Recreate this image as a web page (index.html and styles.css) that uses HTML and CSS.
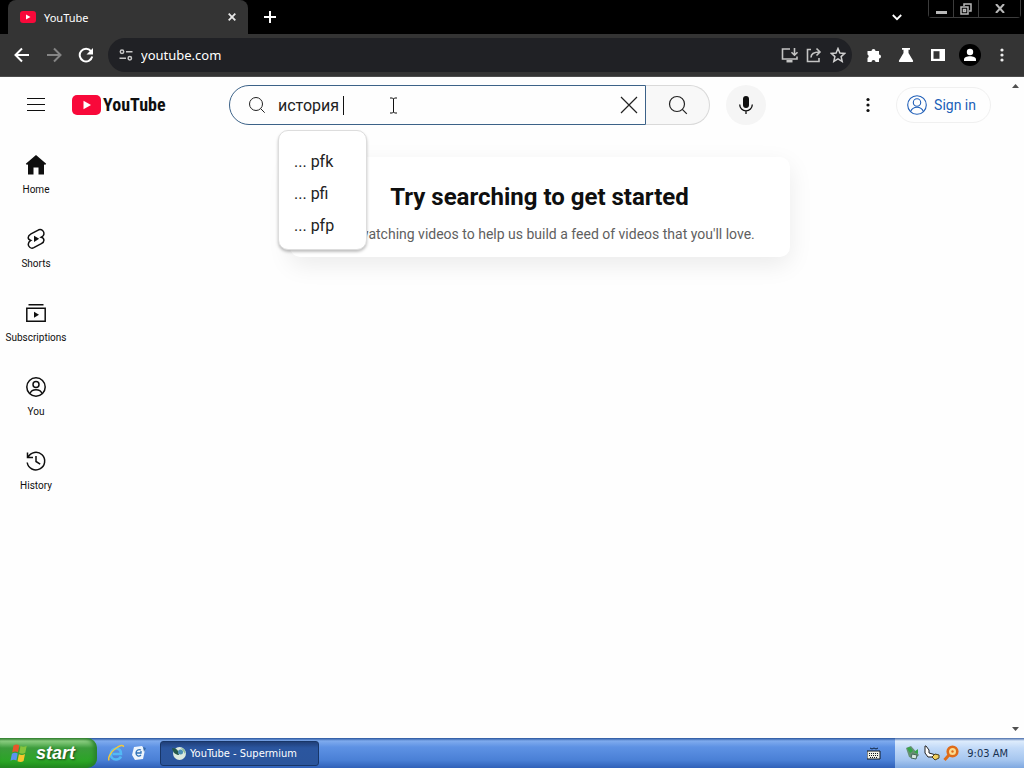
FILE: index.html
```html
<!doctype html>
<html lang="en">
<head>
    <meta charset="UTF-8">
    <meta name="viewport" content="width=device-width, initial-scale=1.0">
    <title>YouTube</title>
    <link rel="stylesheet" href="styles.css">
</head>
<body>
<!-- Tab strip -->
<div class="tabstrip">
    <div class="tab">
        <svg class="favicon" width="16" height="12" viewBox="0 0 16 12"><rect width="16" height="12" rx="3" fill="#f8093a"/><path d="M6 3.5v5L10.500 6z" fill="#fff"/></svg>
        <span class="tab-title">YouTube</span>
        <button class="icon-btn" aria-label="Close tab"><svg width="8" height="8" viewBox="0 0 8 8"><path d="M.7.7l6.600 6.600M7.300.7L.7 7.300" stroke="#e8e8e8" stroke-width="1.800"/></svg></button>
    </div>
    <button class="icon-btn new-tab" aria-label="New tab"><svg width="12" height="12" viewBox="0 0 12 12"><path d="M6 0v12M0 6h12" stroke="#fff" stroke-width="2"/></svg></button>
    <button class="icon-btn tab-search" aria-label="Search tabs"><svg width="10" height="7" viewBox="0 0 10 7"><path d="M.8 1L5 5.200 9.200 1" fill="none" stroke="#fff" stroke-width="1.800"/></svg></button>
    <div class="window-buttons">
        <button class="win-btn" aria-label="Minimize"><svg width="11" height="11" viewBox="0 0 11 11"><path d="M0 8h11v3H0z" fill="#b8b8b8"/></svg></button>
        <button class="win-btn" aria-label="Restore"><svg width="12" height="12" viewBox="0 0 12 12"><path d="M4 3V1h7v7H9M1 4h7v7H1zM3.500 6.500h2v2h-2z" fill="none" stroke="#b8b8b8" stroke-width="1.500"/></svg></button>
        <button class="win-btn win-close" aria-label="Close"><svg width="10" height="9" viewBox="0 0 10 9"><path d="M1 0l8 9M9 0L1 9" stroke="#b8b8b8" stroke-width="2"/></svg></button>
    </div>
</div>

<!-- Toolbar -->
<div class="toolbar">
    <button class="icon-btn" aria-label="Back"><svg width="16" height="16" viewBox="0 0 16 16"><path d="M15 8H2M8 1.500L1.500 8 8 14.500" fill="none" stroke="#fff" stroke-width="2"/></svg></button>
    <button class="icon-btn" aria-label="Forward" disabled><svg width="16" height="16" viewBox="0 0 16 16"><path d="M1 8h13M8 1.500L14.500 8 8 14.500" fill="none" stroke="#858585" stroke-width="2"/></svg></button>
    <button class="icon-btn" aria-label="Reload"><svg width="16" height="16" viewBox="0 0 16 16"><path d="M13 4.200A6.300 6.300 0 1 0 14.200 9.500" fill="none" stroke="#fff" stroke-width="2"/><path d="M15 1v6.500H8.500z" fill="#fff"/></svg></button>
    <div class="omnibox">
        <svg width="14" height="12" viewBox="0 0 14 12" fill="none" stroke="#c8c8c8" stroke-width="1.500"><circle cx="3" cy="2.800" r="1.700"/><path d="M7 2.800h6.500M.5 9.200H7"/><circle cx="10.800" cy="9.200" r="1.700"/></svg>
        <input class="url" type="text" value="youtube.com" aria-label="Address">
        <button class="icon-btn" aria-label="Install"><svg width="18" height="16" viewBox="0 0 18 16" fill="none" stroke="#c4c4c4" stroke-width="1.600"><path d="M9 2H1.500v10H16V9.500"/><path d="M13.500 1v7M10.500 5.200l3 3 3-3"/><path d="M5.500 14.200h6" stroke-width="2.500"/></svg></button>
        <button class="icon-btn" aria-label="Share"><svg width="16" height="16" viewBox="0 0 16 16" fill="none" stroke="#c4c4c4" stroke-width="1.600"><path d="M5 2.500H1.500v12h11.500V11"/><path d="M5 10.500c0-4 2.500-5.500 8.500-5.500M10.500 1.500L14 5l-3.500 3.500"/></svg></button>
        <button class="icon-btn" aria-label="Bookmark"><svg width="16" height="16" viewBox="0 0 16 16"><path d="M8 1.500l1.900 4.500 4.800.4-3.600 3.200 1.100 4.800L8 11.900l-4.200 2.500 1.100-4.800L1.300 6.400 6.100 6z" fill="none" stroke="#d0d0d0" stroke-width="1.500"/></svg></button>
    </div>
    <div class="toolbar-actions">
        <button class="icon-btn" aria-label="Extensions"><svg width="16" height="16" viewBox="0 0 16 16"><path d="M1.500 4h4a2 2 0 1 1 4 0h3.500v3.500a2 2 0 1 1 0 4V15H9.500a2 2 0 0 0-4 0h-4v-4a2 2 0 0 0 0-3.600z" fill="#fff"/></svg></button>
        <button class="icon-btn" aria-label="Experiments"><svg width="16" height="16" viewBox="0 0 16 16"><path d="M4 1h8v1.800h-1.500V6l4.500 7.500c.4 1-.1 1.500-1 1.500H2c-.9 0-1.400-.5-1-1.500L5.500 6V2.800H4z" fill="#fff"/></svg></button>
        <button class="icon-btn" aria-label="Side panel"><svg width="14" height="14" viewBox="0 0 14 14"><path d="M0 1h14v12H0z" fill="#fff"/><path d="M2.500 3.200h6v7.600h-6z" fill="#343434"/></svg></button>
        <button class="icon-btn" aria-label="Profile"><svg width="22" height="22" viewBox="0 0 22 22"><circle cx="11" cy="11" r="11" fill="#000"/><circle cx="11" cy="8" r="3.200" fill="#fff"/><path d="M5 17v-1.500c0-2 3-3.200 6-3.200s6 1.200 6 3.200V17z" fill="#fff"/></svg></button>
        <button class="icon-btn" aria-label="Menu"><svg width="4" height="14" viewBox="0 0 4 14" fill="#eee"><circle cx="2" cy="2" r="1.600"/><circle cx="2" cy="7" r="1.600"/><circle cx="2" cy="12" r="1.600"/></svg></button>
    </div>
</div>

<!-- Page -->
<div class="viewport">
    <div class="page">
        <header class="masthead">
            <div class="brand">
                <button class="icon-btn" aria-label="Guide"><svg width="24" height="24" viewBox="0 0 24 24"><path d="M3 5.500h18M3 11.500h18M3 17.500h18" stroke="#0f0f0f"/></svg></button>
                <a class="logo" href="#">
                    <svg width="29" height="20" viewBox="0 0 29 20"><rect width="29" height="20" rx="5" fill="#f8093a"/><path d="M11.500 5.700v8.600L19 10z" fill="#fff"/></svg>
                    <span>YouTube</span>
                </a>
            </div>
            <form class="search">
                <div class="search-box">
                    <svg width="18" height="18" viewBox="0 0 18 18" fill="none" stroke="#222"><circle cx="8" cy="8" r="6.500"/><path d="M12.700 12.700l4 4"/></svg>
                    <input type="text" value="история " aria-label="Search" autocomplete="off">
                    <span class="caret"></span>
                    <button class="icon-btn" type="button" aria-label="Clear"><svg width="18" height="18" viewBox="0 0 18 18"><path d="M1 1l16 16M17 1L1 17" stroke="#222" stroke-width="1.200"/></svg></button>
                    <svg class="pointer" width="9" height="17" viewBox="0 0 9 17"><path d="M1 1h2.500l1 1 1-1H8M4.500 2v13M1 16h2.500l1-1 1 1H8" fill="none" stroke="#111"/></svg>
                    <ul class="suggestions">
                        <li>... pfk</li>
                        <li>... pfi</li>
                        <li>... pfp</li>
                    </ul>
                </div>
                <button class="search-btn" type="button" aria-label="Search"><svg width="20" height="20" viewBox="0 0 20 20" fill="none" stroke="#222" stroke-width="1.200"><circle cx="9" cy="9" r="7.500"/><path d="M14.300 14.300l4.500 4.500"/></svg></button>
                <button class="mic-btn" type="button" aria-label="Voice search"><svg width="24" height="24" viewBox="0 0 24 24"><rect x="9" y="3" width="6" height="12" rx="3" fill="#0f0f0f"/><path d="M5.700 11.500a6.300 6.300 0 0 0 12.600 0M12 18v3" fill="none" stroke="#0f0f0f" stroke-width="1.300"/></svg></button>
            </form>
            <div class="account">
                <button class="icon-btn" aria-label="Settings"><svg width="4" height="16" viewBox="0 0 4 16" fill="#0f0f0f"><circle cx="2" cy="2.500" r="1.600"/><circle cx="2" cy="8" r="1.600"/><circle cx="2" cy="13.500" r="1.600"/></svg></button>
                <a class="sign-in" href="#">
                    <svg width="20" height="20" viewBox="0 0 20 20" fill="none" stroke="#205fb8" stroke-width="1.100"><circle cx="10" cy="10" r="9.300"/><circle cx="10" cy="7.500" r="3.700"/><path d="M3.600 16.500c1.200-3 3.500-4.300 6.400-4.300s5.200 1.300 6.400 4.300"/></svg>
                    Sign in
                </a>
            </div>
        </header>
        <div class="content">
            <nav class="guide">
                <a href="#"><svg width="24" height="24" viewBox="0 0 24 24"><path d="M12 2L1.800 10.700l1.200 1.300 1-.8V21.500h5.500v-7h5v7H20V11.200l1 .8 1.200-1.300z" fill="#0f0f0f"/></svg>Home</a>
                <a href="#"><svg width="24" height="24" viewBox="0 0 24 24"><path d="M14.700 2.800L7 6.800C3.300 8.800 3.300 12.200 6.800 13.400 3.300 15.500 3.800 19 6 20.500c1.300.9 2.600.8 3.800.2l7.500-4c3.500-2 3.500-5.300 0-6.400 3.200-1.500 3.400-4.900 1.300-6.800-1.200-1-2.500-1.200-3.900-.7z" fill="none" stroke="#0f0f0f" stroke-width="1.500"/><path d="M10 8.700v6.200l5.200-3.100z" fill="#0f0f0f"/></svg>Shorts</a>
                <a href="#"><svg width="24" height="24" viewBox="0 0 24 24"><path d="M4.500 3.700h15M2.800 7.200h18.400v13H2.800z" fill="none" stroke="#0f0f0f" stroke-width="1.500"/><path d="M10 10.700v6l5-3z" fill="#0f0f0f"/></svg>Subscriptions</a>
                <a href="#"><svg width="24" height="24" viewBox="0 0 24 24" fill="none" stroke="#0f0f0f" stroke-width="1.500"><circle cx="12" cy="12" r="9.200"/><circle cx="12" cy="9.500" r="3"/><path d="M6 18.500c1-2.700 3.200-3.800 6-3.800s5 1.100 6 3.800"/></svg>You</a>
                <a href="#"><svg width="24" height="24" viewBox="0 0 24 24" fill="none" stroke="#0f0f0f" stroke-width="1.500"><path d="M4 8.200a8.800 8.800 0 1 1-.8 5.300M3.500 3.500v5H9"/><path d="M12 7v5.500l4.200 2.600"/></svg>History</a>
            </nav>
            <main class="feed">
                <section class="nudge">
                    <h1>Try searching to get started</h1>
                    <p>Start watching videos to help us build a feed of videos that you'll love.</p>
                </section>
            </main>
        </div>
    </div>
    <div class="scrollbar">
        <svg width="7" height="4" viewBox="0 0 7 4"><path d="M0 4h7L3.500 0z" fill="#505050"/></svg>
        <svg width="7" height="4" viewBox="0 0 7 4"><path d="M0 0h7L3.500 4z" fill="#505050"/></svg>
    </div>
</div>

<!-- Taskbar -->
<footer class="taskbar">
    <button class="start">
        <svg width="20" height="20" viewBox="0 0 20 20"><path d="M3.500 2.500c2-1.300 4-1.200 5.800-.2L8 9.200c-2-1-3.800-1-5.800.2z" fill="#e8562a"/><path d="M10.500 3c2 1 4 1 6.200-.2l-1.400 7c-2 1.200-4 1.200-6.100.1z" fill="#86c43c"/><path d="M1.900 10.700c2-1.200 3.800-1.200 5.800-.2l-1.300 7c-2-1-3.800-1-5.900.2z" fill="#5b93ee"/><path d="M8.900 11.200c2 1.100 4.100 1.100 6.100-.1l-1.400 7c-2 1.200-4 1.200-6.100.1z" fill="#f7c52d"/></svg>
        start
    </button>
    <div class="quick-launch">
        <svg width="18" height="18" viewBox="0 0 18 18" fill="none"><path d="M14 12.500c-1 2-3 3-5 3-3.200 0-5.300-2.300-5.300-5.500S6 4.500 9 4.500s5 2 5 5.500H5.500" stroke="#53b9f5" stroke-width="2.600"/><path d="M2 16.500C.5 13.500 4 8 8.500 4.500S16.500.5 16.500 3" stroke="#f3c83a" stroke-width="1.400"/></svg>
        <svg width="16" height="16" viewBox="0 0 16 16"><path d="M3 2l8-1 3 4-2 9-8 1-3-5z" fill="#eef5fc"/><path d="M12 2l3 1-2 4z" fill="#3569a8"/><path d="M10 5c-2-1-5 0-5 3s3 4 5 2M5.500 8H10V6" fill="none" stroke="#2c70b7" stroke-width="1.300"/></svg>
    </div>
    <button class="task">
        <svg width="16" height="16" viewBox="0 0 16 16"><circle cx="8.500" cy="8.500" r="6.500" fill="#dceadf"/><path d="M1 3c3 0 5 1 6 3l1 4C5 10 2 8 1 3z" fill="#24584a"/><circle cx="9.500" cy="7" r="2.500" fill="#4a8db4"/><path d="M10 3c3 0 5 3 4 6l-2-3z" fill="#8dbd9d"/></svg>
        YouTube - Supermium
    </button>
    <svg class="keyboard" width="14" height="14" viewBox="0 0 14 14"><path d="M3 2l2 1 2-1 2 1 2-1" fill="none" stroke="#102540"/><path d="M0 5h13v8H0z" fill="#f2f2e6" stroke="#101820"/><path d="M2 7.500h10M2 9.500h10M3 11.500h7" stroke="#101820" stroke-dasharray="1 1"/></svg>
    <div class="tray">
        <svg width="16" height="16" viewBox="0 0 16 16"><path d="M1 3l5-2 8 9-4 4-6-2z" fill="#679073"/><path d="M2 3l3-1 3 4-3 2zM9 7l4-3v5z" fill="#35a647"/><path d="M7 9l5 1-1 4-5-1z" fill="#d7e9df" stroke="#45655a"/></svg>
        <svg width="16" height="16" viewBox="0 0 16 16"><path d="M1 1v7l3 4h6l2-2-7-2V5L2 1z" fill="#fff" stroke="#222"/><path d="M8 12l3-3 4 1v3l-4 2z" fill="#f2d060" stroke="#4e401a"/></svg>
        <svg width="16" height="16" viewBox="0 0 16 16"><circle cx="9.500" cy="6.500" r="4.800" fill="#fbdc91" stroke="#df6c19" stroke-width="2.600"/><path d="M6 10l-4.500 5" stroke="#df6c19" stroke-width="3"/><circle cx="9.500" cy="6.500" r="1.200" fill="#df6c19"/></svg>
        <span class="clock">9:03 AM</span>
    </div>
</footer>
</body>
</html>
```
FILE: styles.css
```css
* {
    box-sizing: border-box;
}

body {
    display: flex;
    flex-direction: column;
    height: 100vh;
    margin: 0;
    overflow: hidden;
    font-family: Roboto, sans-serif;
    color: #0f0f0f;
    background: #fefefe;
}

svg {
    display: block;
    flex: none;
}

button,
input {
    font: inherit;
    color: inherit;
}

a {
    color: inherit;
    text-decoration: none;
}

.icon-btn {
    display: flex;
    align-items: center;
    justify-content: center;
    padding: 0;
    border: 0;
    background: none;
}

/* Tab strip */
.tabstrip {
    display: flex;
    flex: none;
    align-items: center;
    height: 34px;
    padding-left: 8px;
    background: #000;
}

.tab {
    display: flex;
    align-items: center;
    gap: 8px;
    width: 240px;
    height: 34px;
    padding: 0 12px;
    border-radius: 8px 8px 0 0;
    background: #343434;
    color: #fff;
    font: 11px "Noto Sans", sans-serif;
}

.tab-title {
    flex: 1;
}

.new-tab {
    margin-left: 16px;
}

.tab-search {
    margin-left: auto;
    margin-right: 26px;
}

.window-buttons {
    display: flex;
    align-self: flex-start;
    height: 18px;
    margin-right: 3px;
    border: 1px solid #3c3c3c;
    border-top: 0;
    border-radius: 0 0 4px 4px;
}

.win-btn {
    display: flex;
    align-items: center;
    justify-content: center;
    width: 25px;
    padding: 0;
    border: 0;
    border-right: 1px solid #3c3c3c;
    background: #000;
}

.win-close {
    width: 41px;
    border-right: 0;
}

/* Toolbar */
.toolbar {
    display: flex;
    flex: none;
    align-items: center;
    gap: 16px;
    height: 43px;
    padding: 0 14px;
    border-bottom: 1px solid #4c4c4c;
    background: #343434;
}

.toolbar .icon-btn {
    width: 16px;
}

.omnibox {
    display: flex;
    flex: 1;
    align-items: center;
    gap: 8px;
    height: 34px;
    margin: 0 -2px;
    padding: 0 6px 0 11px;
    border-radius: 17px;
    background: #202125;
}

.url {
    flex: 1;
    min-width: 0;
    padding: 0;
    border: 0;
    background: none;
    color: #fff;
    font: 13px "Noto Sans", sans-serif;
}

.toolbar-actions {
    display: flex;
    align-items: center;
    gap: 16px;
}

/* Page */
.viewport {
    display: flex;
    flex: 1;
    min-height: 0;
}

.page {
    flex: 1;
    min-width: 0;
}

.scrollbar {
    display: flex;
    flex-direction: column;
    justify-content: space-between;
    align-items: center;
    width: 17px;
    padding: 7px 0;
}

/* Masthead */
.masthead {
    display: flex;
    align-items: center;
    justify-content: space-between;
    height: 56px;
    padding: 0 16px 0 24px;
}

.brand {
    display: flex;
    align-items: center;
    gap: 24px;
    width: 186px;
}

.logo {
    display: flex;
    align-items: center;
    gap: 2px;
    font: bold 18px/24px "Roboto Condensed", Roboto, sans-serif;
}

.search {
    display: flex;
    flex: 0 1 537px;
    height: 40px;
}

.search-box {
    position: relative;
    display: flex;
    flex: 1;
    align-items: center;
    min-width: 0;
    padding: 0 7px 0 18px;
    border: 1px solid #3c6288;
    border-radius: 20px 0 0 20px;
}

.search-box input {
    flex: 1;
    min-width: 0;
    margin-left: 12px;
    padding: 0;
    border: 0;
    outline: 0;
    background: none;
    color: #222;
    font-size: 16px;
}

.caret {
    position: absolute;
    top: 10px;
    left: 113px;
    width: 1px;
    height: 19px;
    background: #111;
}

.pointer {
    position: absolute;
    top: 11px;
    left: 159px;
}

.suggestions {
    position: absolute;
    top: 44px;
    left: 48px;
    z-index: 1;
    width: 89px;
    margin: 0;
    padding: 15px 0 7px;
    border: 1px solid #ddd;
    border-radius: 10px;
    background: #fff;
    box-shadow: 0 2px 3px rgba(0, 0, 0, 0.25);
    color: #222;
    list-style: none;
}

.suggestions li {
    padding: 0 15px;
    font-size: 16px;
    line-height: 32px;
}

.search-btn {
    display: flex;
    align-items: center;
    justify-content: center;
    width: 64px;
    padding: 0;
    border: 1px solid #d9d9d9;
    border-left: 0;
    border-radius: 0 20px 20px 0;
    background: #f8f8f8;
}

.mic-btn {
    display: flex;
    align-items: center;
    justify-content: center;
    width: 40px;
    margin-left: 16px;
    padding: 0;
    border: 0;
    border-radius: 50%;
    background: #f5f5f5;
}

.account {
    display: flex;
    align-items: center;
    justify-content: flex-end;
    gap: 26px;
    width: 206px;
}

.sign-in {
    display: flex;
    align-items: center;
    gap: 7px;
    height: 36px;
    padding: 0 14px 0 10px;
    border: 1px solid #f0f0f0;
    border-radius: 18px;
    color: #205fb8;
    font-size: 14px;
}

/* Guide and feed */
.content {
    display: flex;
}

.guide {
    width: 72px;
    padding-top: 4px;
}

.guide a {
    display: flex;
    flex-direction: column;
    align-items: center;
    gap: 6px;
    height: 74px;
    padding-top: 16px;
    font-size: 10px;
    line-height: 14px;
}

.feed {
    flex: 1;
    padding-top: 24px;
}

.nudge {
    max-width: 500px;
    margin: 0 auto;
    padding: 24px 16px 13px;
    border-radius: 10px;
    background: #fff;
    box-shadow: 0 8px 24px rgba(0, 0, 0, 0.08);
    text-align: center;
}

.nudge h1 {
    margin: 0 0 11px;
    font-size: 24px;
    line-height: 32px;
}

.nudge p {
    margin: 0;
    color: #606060;
    font-size: 14px;
    line-height: 20px;
}

/* Taskbar */
.taskbar {
    display: flex;
    flex: none;
    align-items: center;
    height: 30px;
    background: linear-gradient(#28549c, #7fabee 3px, #5e92e4 9px, #4a80d6 22px, #2f60b8);
    color: #fff;
    font: 11px "DejaVu Sans Condensed", sans-serif;
}

.start {
    display: flex;
    align-items: center;
    gap: 6px;
    height: 30px;
    width: 97px;
    padding: 0 0 0 10px;
    border: 0;
    border-radius: 0 10px 10px 0;
    background: linear-gradient(#387e35, #8ed084 3px, #3c9c3c 10px, #2ba526 23px, #1f8a1c);
    box-shadow: inset -3px 0 4px #28802a;
    font: italic 600 18px "Liberation Sans", sans-serif;
    text-shadow: 1px 1px 2px #1b4c1a;
}

.quick-launch {
    display: flex;
    align-items: center;
    gap: 6px;
    margin-left: 10px;
}

.task {
    display: flex;
    align-items: center;
    gap: 3px;
    width: 159px;
    height: 25px;
    margin-left: 13px;
    padding: 0 10px;
    border: 1px solid #183668;
    border-radius: 3px;
    background: linear-gradient(#203f78, #2b569f 6px, #2b559c);
    white-space: nowrap;
}

.keyboard {
    margin-left: auto;
    margin-right: 14px;
}

.tray {
    display: flex;
    align-items: center;
    gap: 3px;
    height: 30px;
    padding: 0 16px 0 10px;
    background: linear-gradient(#486caa, #deecfc 3px, #c2daf8 10px, #a6c6ef 22px, #7fa8e0);
    color: #18304f;
}

.clock {
    margin-left: 5px;
}
```
